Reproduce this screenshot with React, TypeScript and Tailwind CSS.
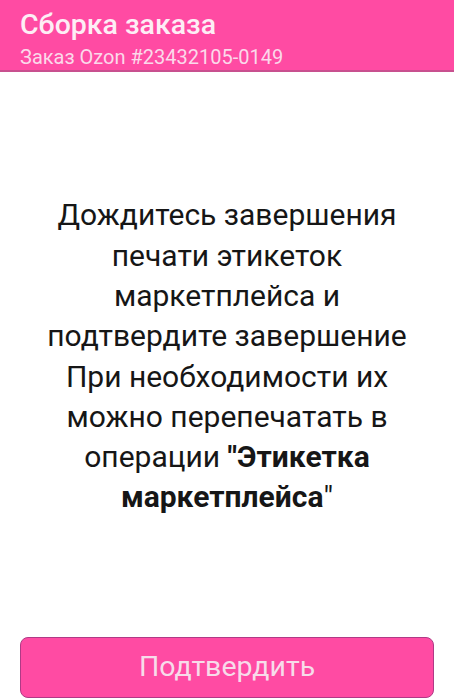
const lines = [
  'Дождитесь завершения',
  'печати этикеток',
  'маркетплейса и',
  'подтвердите завершение',
  'При необходимости их',
  'можно перепечатать в',
];

export default function App() {
  return (
    <div className="h-[700px] flex flex-col bg-white font-['Roboto',sans-serif]">
      <header className="bg-[#ff4ba3] px-5 pt-[8px] h-[72px] border-b-2 border-[#c8508f] shrink-0">
        <h1 className="text-[28.5px] leading-[34px] font-medium text-[#fdeef5]">Сборка заказа</h1>
        <p className="mt-[3px] text-[20px] leading-[24px] text-[#fbd9ea]">Заказ Ozon #23432105-0149</p>
      </header>

      <main className="flex-1 flex items-center justify-center px-4 pt-1">
        <p className="text-center text-[30px] leading-[40.3px] text-[#161616]">
          {lines.map(l => (
            <span key={l} className="block">{l}</span>
          ))}
          <span className="block">
            операции <b>"Этикетка</b>
          </span>
          <span className="block">
            <b>маркетплейса</b>"
          </span>
        </p>
      </main>

      <div className="px-5 pb-[2px] shrink-0">
        <button className="w-full h-[61px] rounded-lg bg-[#ff4ba3] border border-[#b03a86] text-[28.5px] text-[#f7dcea]">
          Подтвердить
        </button>
      </div>
    </div>
  );
}
